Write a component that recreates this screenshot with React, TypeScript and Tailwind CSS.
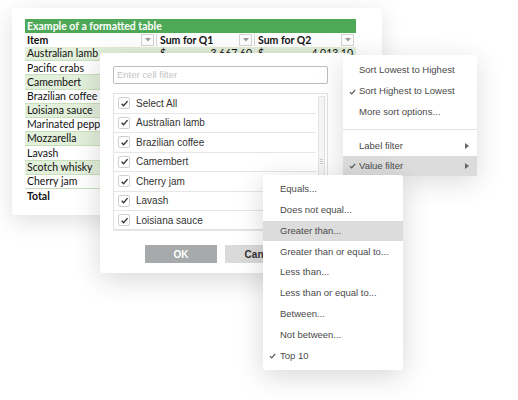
import { ChevronDown } from "lucide-react";

const rows = [
  { name: "Australian lamb", q1: "3,667.60", q2: "4,013.10" },
  { name: "Pacific crabs", q1: "", q2: "" },
  { name: "Camembert", q1: "", q2: "" },
  { name: "Brazilian coffee", q1: "", q2: "" },
  { name: "Loisiana sauce", q1: "", q2: "" },
  { name: "Marinated pepp", q1: "", q2: "" },
  { name: "Mozzarella", q1: "", q2: "" },
  { name: "Lavash", q1: "", q2: "" },
  { name: "Scotch whisky", q1: "", q2: "" },
  { name: "Cherry jam", q1: "", q2: "" },
];

const filterItems = [
  "Select All",
  "Australian lamb",
  "Brazilian coffee",
  "Camembert",
  "Cherry jam",
  "Lavash",
  "Loisiana sauce",
];

const valueOptions = [
  "Equals...",
  "Does not equal...",
  "Greater than...",
  "Greater than or equal to...",
  "Less than...",
  "Less than or equal to...",
  "Between...",
  "Not between...",
  "Top 10",
];

const Check = ({ className = "" }: { className?: string }) => (
  <svg viewBox="0 0 10 10" className={className} fill="none">
    <path d="M1.8 5.2 L4 7.4 L8.4 2.4" stroke="currentColor" strokeWidth="1.5" />
  </svg>
);

const HeadArrow = () => (
  <span className="flex h-[12px] w-[13px] items-center justify-center border border-[#d4d4d4] bg-white text-[#9a9a9a]">
    <svg viewBox="0 0 6 4" className="h-[4px] w-[6px]">
      <path d="M0 0 H6 L3 3.5 Z" fill="currentColor" />
    </svg>
  </span>
);

const SubArrow = () => (
  <svg viewBox="0 0 4 6" className="h-[6px] w-[4px] text-[#666]">
    <path d="M0 0 L4 3 L0 6 Z" fill="currentColor" />
  </svg>
);

const App = () => {
  return (
    <div className="relative h-[400px] w-[518px] overflow-hidden bg-white font-['Liberation_Sans',Arial,sans-serif]">
      {/* Spreadsheet card */}
      <div className="absolute left-[12px] top-[8px] h-[207px] w-[370px] rounded-[3px] bg-white px-[13px] pt-[11px] shadow-[0_6px_24px_rgba(0,0,0,0.13)]">
        <div className="w-[331px] font-['Lato',sans-serif] text-[10.5px] leading-none text-[#111]">
          <div className="flex h-[14px] items-center bg-[#4ea957] pl-[2px] font-bold text-white">
            Example of a formatted table
          </div>
          <div className="flex h-[14px] items-center font-bold">
            <div className="flex w-[132px] items-center justify-between border-r border-[#d8d8d8] pl-[2px] pr-[2px]">
              <span>Item</span>
              <HeadArrow />
            </div>
            <div className="flex w-[98px] items-center justify-between border-r border-[#d8d8d8] pl-[3px] pr-[2px]">
              <span>Sum for Q1</span>
              <HeadArrow />
            </div>
            <div className="flex w-[101px] items-center justify-between pl-[3px] pr-[2px]">
              <span>Sum for Q2</span>
              <HeadArrow />
            </div>
          </div>
          {rows.map((r, i) => (
            <div
              key={r.name}
              className={`flex h-[14.2px] items-center border-b border-[#c9dfbb] ${i % 2 === 0 ? "bg-[#e2efda]" : "bg-white"}`}
            >
              <div className="w-[132px] pl-[2px]">{r.name}</div>
              <div className="flex w-[98px] justify-between px-[3px]">
                <span>{r.q1 ? "$" : ""}</span>
                <span>{r.q1}</span>
              </div>
              <div className="flex w-[101px] justify-between px-[3px]">
                <span>{r.q2 ? "$" : ""}</span>
                <span>{r.q2}</span>
              </div>
            </div>
          ))}
          <div className="flex h-[14px] items-center pl-[2px] font-bold">Total</div>
        </div>
      </div>

      {/* Filter dialog */}
      <div className="absolute left-[100px] top-[53px] h-[220px] w-[250px] rounded-[3px] bg-white px-[13px] pt-[13px] shadow-[0_6px_28px_rgba(0,0,0,0.16)]">
        <div className="flex h-[18px] w-[215px] items-center rounded-[2px] border border-[#bdbdbd] px-[3px] text-[9.5px] text-[#c4c4c4]">
          Enter cell filter
        </div>
        <div className="mt-[9px] flex h-[137px] w-[215px] border border-[#e2e2e2]">
          <div className="flex-1">
            {filterItems.map((f) => (
              <div
                key={f}
                className="flex h-[19.5px] items-center gap-[6px] border-b border-[#e6e6e6] pl-[4px] text-[10px] text-[#333]"
              >
                <span className="flex h-[12px] w-[12px] items-center justify-center rounded-[2px] border border-[#d0d0d0] bg-white text-[#333]">
                  <Check className="h-[9px] w-[9px]" />
                </span>
                {f}
              </div>
            ))}
          </div>
          <div className="m-[2px] flex w-[7px] items-center justify-center border border-[#e4e4e4] bg-[#f6f6f6]">
            <div className="flex flex-col gap-[1px]">
              <span className="h-px w-[3px] bg-[#cfcfcf]" />
              <span className="h-px w-[3px] bg-[#cfcfcf]" />
              <span className="h-px w-[3px] bg-[#cfcfcf]" />
            </div>
          </div>
        </div>
        <div className="mt-[15px] flex gap-[8px] pl-[32px]">
          <div className="flex h-[18px] w-[72px] items-center justify-center bg-[#a7aaab] text-[10px] font-bold text-white">
            OK
          </div>
          <div className="flex h-[18px] w-[72px] items-center justify-center bg-[#dadada] text-[10px] font-bold text-[#333]">
            Cancel
          </div>
        </div>
      </div>

      {/* Sort menu */}
      <div className="absolute left-[343px] top-[55px] w-[134px] rounded-[3px] bg-white pt-[5px] text-[9.5px] text-[#4a4a4a] shadow-[0_6px_28px_rgba(0,0,0,0.14)]">
        <div className="flex h-[21px] items-center pl-[16px]">Sort Lowest to Highest</div>
        <div className="flex h-[21px] items-center">
          <Check className="ml-[5px] mr-[2px] h-[8px] w-[9px] text-[#555]" />
          Sort Highest to Lowest
        </div>
        <div className="flex h-[21px] items-center pl-[16px]">More sort options...</div>
        <div className="my-[6px] h-px bg-[#e2e2e2]" />
        <div className="flex h-[20px] items-center justify-between pl-[16px] pr-[8px]">
          Label filter
          <SubArrow />
        </div>
        <div className="flex h-[20px] items-center justify-between bg-[#dcdcdc] pr-[8px]">
          <span className="flex items-center">
            <Check className="ml-[5px] mr-[2px] h-[8px] w-[9px] text-[#555]" />
            Value filter
          </span>
          <SubArrow />
        </div>
      </div>

      {/* Value filter submenu */}
      <div className="absolute left-[263px] top-[175px] w-[140px] rounded-[3px] bg-white py-[4px] text-[9.5px] text-[#4a4a4a] shadow-[0_6px_28px_rgba(0,0,0,0.16)]">
        {valueOptions.map((o) => (
          <div
            key={o}
            className={`flex h-[20.8px] items-center ${o === "Greater than..." ? "bg-[#dcdcdc]" : ""} ${o === "Top 10" ? "" : "pl-[17px]"}`}
          >
            {o === "Top 10" && <Check className="ml-[5px] mr-[3px] h-[8px] w-[9px] text-[#555]" />}
            {o}
          </div>
        ))}
      </div>
    </div>
  );
};

export default App;
